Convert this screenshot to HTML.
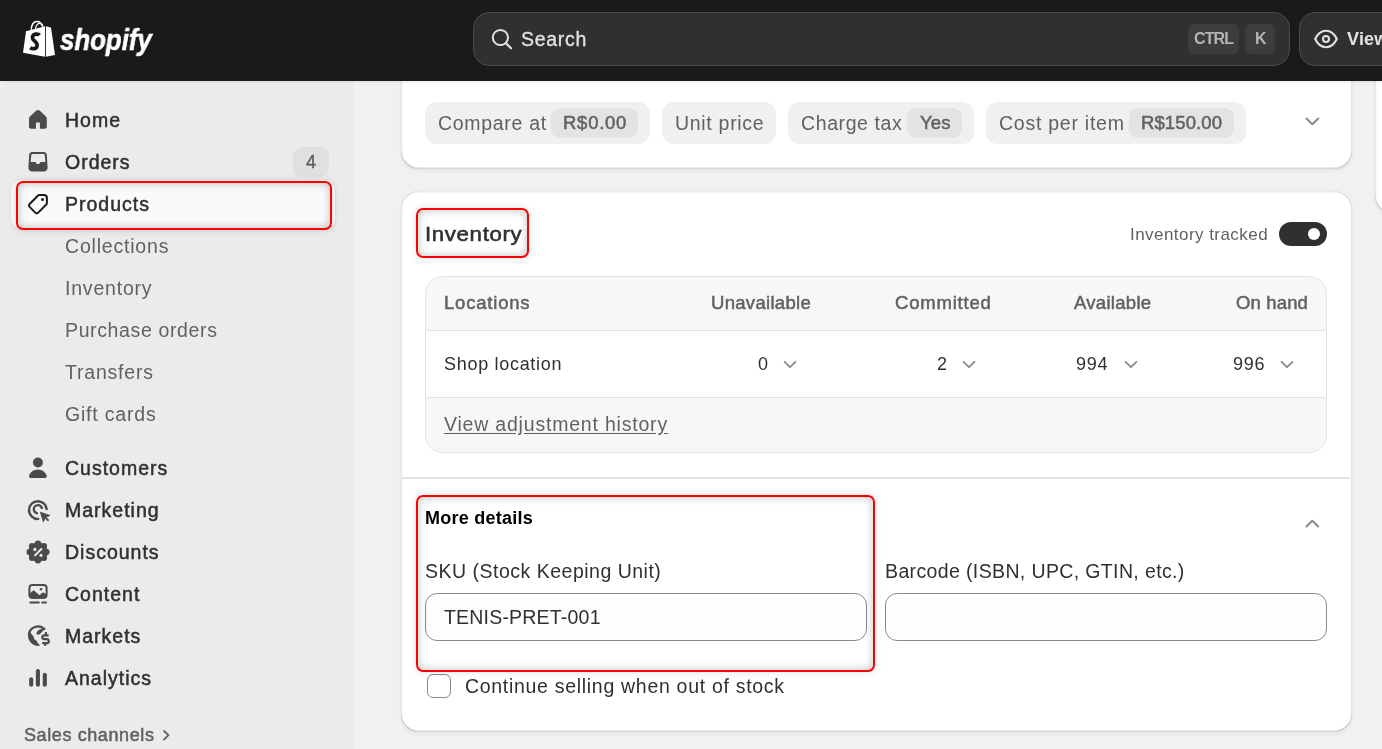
<!DOCTYPE html>
<html><head><meta charset="utf-8">
<style>
*{box-sizing:border-box;margin:0;padding:0}
html,body{width:1382px;height:749px;overflow:hidden;background:#f1f1f1;font-family:"Liberation Sans",sans-serif;}
.abs{position:absolute}
.t{position:absolute;white-space:nowrap;line-height:1;will-change:transform}
#top{position:absolute;left:0;top:0;width:1382px;height:81px;background:#1a1a1a;z-index:10;box-shadow:0 1.5px 3px rgba(0,0,0,.07)}
#side{position:absolute;left:0;top:81px;width:353px;height:668px;background:#ebebeb;border-top-left-radius:12px}
.nav{font-size:19.5px;color:#303030;-webkit-text-stroke:0.5px #303030;letter-spacing:1px}
.sub{font-size:19.5px;color:#616161;letter-spacing:0.8px}
.card{position:absolute;background:#fff;border-radius:18px;box-shadow:0 2px 4px rgba(26,26,26,.06),inset 0 1.5px 0 0 rgba(204,204,204,.4),inset 0 -1.5px 0 0 rgba(0,0,0,.16),inset -1.2px 0 0 0 rgba(0,0,0,.10),inset 1.2px 0 0 0 rgba(0,0,0,.10)}
.chip{position:absolute;top:102px;height:42px;background:#f0f0f0;border-radius:12px}
.ichip{position:absolute;top:6px;height:30px;background:#e3e3e3;border-radius:9px}
.ct{font-size:19.5px;color:#616161;letter-spacing:0.7px}
.cb{font-size:18.5px;color:#616161;-webkit-text-stroke:0.5px #616161}
.red{position:absolute;border:2px solid #ff0000;border-radius:7px;box-shadow:inset 0 0 8px rgba(0,0,0,.26),0 0 8px rgba(0,0,0,.12)}
.th{font-size:18.5px;color:#616161;-webkit-text-stroke:0.5px #616161;letter-spacing:0.8px}
.td{font-size:18px;color:#303030;letter-spacing:0.7px}
.body{font-size:19.5px;color:#303030}
.chev{position:absolute}
</style></head><body>
<div id="top">
  <svg class="abs" style="left:22px;top:20px" width="34" height="38" viewBox="0 0 34 38">
    <path d="M9.2 9.8 C9.6 4.2 12 1.4 15 1.4 C17.6 1.4 19.6 3.2 20.6 6.4" fill="none" stroke="#fff" stroke-width="1.5"/>
    <path d="M13.4 8.8 C14.2 5.2 15.8 3.3 17.8 3.3 C19.4 3.3 20.4 4.6 21.2 6.4" fill="none" stroke="#fff" stroke-width="1.2"/>
    <path d="M4 11.2 L23 6.2 L23 36.8 L1 32.8 Z" fill="#fff"/>
    <path d="M23.9 6.3 L29 7.4 L33 35 L23.9 36.8 Z" fill="#fff"/>
    <path d="M17.6 15.2 C16.4 13.7 10.9 13.3 10.4 17.3 C10 20.9 15.7 21.7 15.1 25.7 C14.6 29.1 10.6 29.4 8.1 27.7" fill="none" stroke="#1a1a1a" stroke-width="3.7"/>
  </svg>
  <div class="t" style="left:59.5px;top:25px;font-size:30px;font-weight:700;font-style:italic;color:#fff;-webkit-text-stroke:0.6px #fff;transform:scaleX(0.86);transform-origin:0 0">shopify</div>
  <div class="abs" style="left:473px;top:12px;width:817px;height:54px;background:#303030;border:1px solid #4a4a4a;border-radius:16px"></div>
  <svg class="abs" style="left:490px;top:27px" width="24" height="24" viewBox="0 0 24 24">
    <circle cx="10.4" cy="10.5" r="7.6" fill="none" stroke="#e3e3e3" stroke-width="2"/>
    <path d="M16 16.2 L21 21.2" stroke="#e3e3e3" stroke-width="2.2" stroke-linecap="round"/>
  </svg>
  <div class="t" style="left:521px;top:29.5px;font-size:19.5px;letter-spacing:0.7px;color:#e3e3e3;-webkit-text-stroke:0.3px #e3e3e3">Search</div>
  <div class="abs" style="left:1188px;top:24px;width:51px;height:30px;background:#3d3d3d;border-radius:6px"></div>
  <div class="t" style="left:1194px;top:30.7px;font-size:16px;font-weight:700;letter-spacing:-0.9px;color:#b5b5b5">CTRL</div>
  <div class="abs" style="left:1245px;top:24px;width:30px;height:30px;background:#3d3d3d;border-radius:6px"></div>
  <div class="t" style="left:1254.5px;top:30.7px;font-size:16px;font-weight:700;color:#b5b5b5">K</div>
  <div class="abs" style="left:1299px;top:12px;width:120px;height:54px;background:#303030;border:1px solid #4a4a4a;border-radius:16px"></div>
  <svg class="abs" style="left:1313px;top:27px" width="26" height="24" viewBox="0 0 26 24">
    <path d="M2.2 12 C5 6 9 3.8 13 3.8 C17 3.8 21 6 23.8 12 C21 18 17 20.2 13 20.2 C9 20.2 5 18 2.2 12 Z" fill="none" stroke="#e3e3e3" stroke-width="2.1"/>
    <circle cx="13" cy="12" r="3" fill="none" stroke="#e3e3e3" stroke-width="2.1"/>
  </svg>
  <div class="t" style="left:1347px;top:29.6px;font-size:18px;font-weight:700;letter-spacing:0.2px;color:#e3e3e3">View</div>
</div>

<div id="side"></div>

<!-- sidebar -->
<div class="abs" style="left:11px;top:180px;width:324px;height:49px;background:#fafafa;border-radius:10px;box-shadow:0 1px 3px rgba(0,0,0,.10)"></div>
<div class="t nav" style="left:65px;top:110.5px">Home</div>
<div class="t nav" style="left:65px;top:152.5px">Orders</div>
<div class="abs" style="left:293px;top:147px;width:36px;height:30px;background:#e0e0e0;border-radius:9px"></div>
<div class="t" style="left:305.5px;top:152.7px;font-size:18px;color:#616161;-webkit-text-stroke:0.5px #616161">4</div>
<div class="t nav" style="left:65px;top:194.5px">Products</div>
<div class="t sub" style="left:65px;top:236.5px">Collections</div>
<div class="t sub" style="left:65px;top:278.5px">Inventory</div>
<div class="t sub" style="left:65px;top:320.5px;letter-spacing:0.63px">Purchase orders</div>
<div class="t sub" style="left:65px;top:362.5px">Transfers</div>
<div class="t sub" style="left:65px;top:404.5px">Gift cards</div>
<div class="t nav" style="left:65px;top:458.5px">Customers</div>
<div class="t nav" style="left:65px;top:500.5px">Marketing</div>
<div class="t nav" style="left:65px;top:542.5px">Discounts</div>
<div class="t nav" style="left:65px;top:584.5px">Content</div>
<div class="t nav" style="left:65px;top:626.5px">Markets</div>
<div class="t nav" style="left:65px;top:668.5px">Analytics</div>
<div class="t" style="left:23.5px;top:725.5px;font-size:18px;color:#616161;-webkit-text-stroke:0.5px #616161;letter-spacing:0.6px">Sales channels</div>
<svg class="abs" style="left:158px;top:725px" width="20" height="20" viewBox="0 0 20 20"><path fill="none" stroke="#616161" stroke-width="1.8" stroke-linecap="round" stroke-linejoin="round" d="M6 6L10.5 10.2L6 14.5"/></svg>
<div class="red" style="left:15.5px;top:180.5px;width:316px;height:49px"></div>

<svg class="abs" style="left:22px;top:104px" width="32" height="32" viewBox="0 0 32 32"><path fill="#4a4a4a" d="M16 6c-.6 0-1.2.2-1.6.6L7.9 12.6C7.3 13.2 7 13.9 7 14.7V22.8c0 1.1.9 2 2 2H13.9V18.4H17.9V24.8H22.8c1.1 0 2-.9 2-2V14.7c0-.8-.3-1.5-.9-2.1L17.6 6.6C17.2 6.2 16.6 6 16 6Z"/></svg>
<svg class="abs" style="left:22px;top:146px" width="32" height="32" viewBox="0 0 32 32"><path fill="#4a4a4a" fill-rule="evenodd" d="M10.2 6H21.8c1.5 0 2.8 1.1 3 2.6L25.6 21.4c.2 2.2-1.5 4-3.7 4H10.1c-2.2 0-3.9-1.8-3.7-4L7.2 8.6C7.4 7.1 8.7 6 10.2 6ZM10.3 8.1c-.5 0-.9.4-1 .9L8.6 15.9H13.6c.3 1.3 1.2 2.1 2.4 2.1s2.1-.8 2.4-2.1H23.4L22.7 9c-.1-.5-.5-.9-1-.9Z"/></svg>
<svg class="abs" style="left:22px;top:188px" width="32" height="32" viewBox="0 0 32 32"><path fill="none" stroke="#1a1a1a" stroke-width="2" stroke-linejoin="round" d="M17 7H22c1.6 0 2.9 1.3 2.9 2.9V15c0 .6-.2 1.1-.6 1.5l-8.1 8.1c-.8.8-2.1.8-2.9 0L7.6 18.9c-.8-.8-.8-2.1 0-2.9l8-8C16 7.3 16.5 7 17 7Z"/><circle cx="20.5" cy="11.5" r="1.5" fill="#1a1a1a"/></svg>
<svg class="abs" style="left:22px;top:452px" width="32" height="32" viewBox="0 0 32 32"><circle cx="15.9" cy="10.5" r="5" fill="#4a4a4a"/><path fill="#4a4a4a" d="M15.9 17.5c-4.4 0-7.6 2.9-8.8 6.1-.3.9.3 2.3 1.3 2.3H23.4c1 0 1.6-1.4 1.3-2.3-1.2-3.2-4.4-6.1-8.8-6.1Z"/></svg>
<svg class="abs" style="left:22px;top:494px" width="32" height="32" viewBox="0 0 32 32"><path fill="none" stroke="#4a4a4a" stroke-width="2.4" stroke-linecap="round" d="M16.2 24.9C11.5 25.3 7 21.3 7 16c0-4.9 4-8.8 8.9-8.8 4.5 0 8.3 3.4 8.8 7.8"/><path fill="none" stroke="#4a4a4a" stroke-width="2.3" stroke-linecap="round" d="M15 19.3c-1.8-.5-3.2-2.1-3.2-4 0-2.3 1.9-4.1 4.2-4.1 1.8 0 3.3 1.2 3.9 2.8"/><path fill="#4a4a4a" d="M18.4 18.2L28 21.4L24 23.2L26.8 26L25.8 27L23 24.2L21.3 27.9Z" stroke="#4a4a4a" stroke-width=".8" stroke-linejoin="round"/></svg>
<svg class="abs" style="left:22px;top:536px" width="32" height="32" viewBox="0 0 32 32"><g fill="#4a4a4a"><circle cx="16" cy="16" r="9.6"/><circle cx="16.00" cy="7.70" r="3.2"/><circle cx="21.87" cy="10.13" r="3.2"/><circle cx="24.30" cy="16.00" r="3.2"/><circle cx="21.87" cy="21.87" r="3.2"/><circle cx="16.00" cy="24.30" r="3.2"/><circle cx="10.13" cy="21.87" r="3.2"/><circle cx="7.70" cy="16.00" r="3.2"/><circle cx="10.13" cy="10.13" r="3.2"/></g><path stroke="#ebebeb" stroke-width="2" stroke-linecap="round" d="M13 19.4L19.4 13"/><circle cx="12.9" cy="13.4" r="1.6" fill="#ebebeb"/><circle cx="19" cy="19.3" r="1.6" fill="#ebebeb"/></svg>
<svg class="abs" style="left:22px;top:578px" width="32" height="32" viewBox="0 0 32 32"><rect x="7.4" y="7" width="17.2" height="12.7" rx="3" fill="none" stroke="#4a4a4a" stroke-width="2"/><path fill="#4a4a4a" d="M7.4 15.5L11.8 12.2L17.5 17.3L21 14.3L24.6 16.5V17.7c0 1.6-1.3 3-3 3H10.4c-1.6 0-3-1.3-3-3Z"/><circle cx="19" cy="11.3" r="1.3" fill="#4a4a4a"/><path stroke="#4a4a4a" stroke-width="2" stroke-linecap="round" d="M8.3 24.6H16.9M20.2 24.6H24"/></svg>
<svg class="abs" style="left:22px;top:620px" width="32" height="32" viewBox="0 0 32 32"><path fill="none" stroke="#4a4a4a" stroke-width="2.2" d="M6.9 15.6A9.1 9.1 0 0 1 23 9.75"/><path fill="#4a4a4a" d="M8.2 12.2L11.7 16.8L12 19L14.6 20.7L15.9 23.2L17.8 24.9L17.6 25.8A10.2 10.2 0 0 1 6.4 12.8Z"/><path fill="#4a4a4a" d="M14.3 13.6C14.8 11.8 16 10.3 17.5 9.6L22.3 8.1C21.9 9.6 21 11 19.8 12.2L17.9 14C16.9 14.8 15 15 14.3 13.6Z"/><path fill="none" stroke="#4a4a4a" stroke-width="2.2" d="M26.6 15.3H22.4C21.1 15.3 20.3 16.1 20.3 17.2C20.3 18.4 21.1 19.1 22.4 19.1H24.6C25.9 19.1 26.8 20 26.8 21.2C26.8 22.4 25.9 23.2 24.6 23.2H20.2M23.9 12V15.3M23.2 23.2V25.8"/></svg>
<svg class="abs" style="left:22px;top:662px" width="32" height="32" viewBox="0 0 32 32"><path stroke="#4a4a4a" stroke-width="4.1" stroke-linecap="round" d="M9.2 17.2V22.7M15.9 9V22.7M22.8 12.9V22.7"/></svg>

<!-- card 1 -->
<div class="card" style="left:400.5px;top:30px;width:951px;height:138.5px"></div>
<div class="chip" style="left:425px;width:225px"><div class="t ct" style="left:12.5px;top:11.6px">Compare at</div><div class="ichip" style="left:126px;width:87px"><div class="t cb" style="left:12px;top:6.4px;letter-spacing:0.75px">R$0.00</div></div></div>
<div class="chip" style="left:662px;width:114px"><div class="t ct" style="left:12.5px;top:11.6px">Unit price</div></div>
<div class="chip" style="left:788px;width:186px"><div class="t ct" style="left:12.5px;top:11.6px;letter-spacing:0.6px">Charge tax</div><div class="ichip" style="left:119px;width:55px"><div class="t cb" style="left:13px;top:6.4px;letter-spacing:0.2px">Yes</div></div></div>
<div class="chip" style="left:986px;width:260px"><div class="t ct" style="left:12.5px;top:11.6px;letter-spacing:0.75px">Cost per item</div><div class="ichip" style="left:143px;width:105px"><div class="t cb" style="left:12px;top:6.4px;letter-spacing:0.1px">R$150.00</div></div></div>
<svg class="chev" style="left:1300px;top:110px" width="24" height="24" viewBox="0 0 24 24"><path fill="none" stroke="#8a8a8a" stroke-width="2" stroke-linecap="round" stroke-linejoin="round" d="M6.5 8.5L12.3 14.3L18.2 8.5"/></svg>

<!-- right partial card -->
<div class="card" style="left:1375px;top:30px;width:60px;height:184px"></div>

<!-- card 2 -->
<div class="card" style="left:400.5px;top:191px;width:951px;height:540.5px"></div>
<div class="t" style="left:424.5px;top:223.2px;font-size:21px;color:#303030;-webkit-text-stroke:0.6px #303030;letter-spacing:0.6px;transform:scaleX(1.06);transform-origin:0 0">Inventory</div>
<div class="t" style="left:1129.5px;top:225.8px;font-size:17px;color:#616161;letter-spacing:0.45px">Inventory tracked</div>
<div class="abs" style="left:1279px;top:222px;width:48px;height:24px;background:#303030;border-radius:12px"></div>
<div class="abs" style="left:1307.5px;top:227.5px;width:12.6px;height:12.6px;background:#fff;border-radius:50%"></div>
<div class="red" style="left:415.5px;top:208px;width:113.5px;height:49.5px"></div>

<div class="abs" style="left:425px;top:276px;width:902px;height:177px;border:1px solid #e3e3e3;border-radius:18px;background:#f7f7f7;overflow:hidden">
  <div class="abs" style="left:0;top:53px;width:900px;height:68px;background:#fff;border-top:1px solid #e3e3e3;border-bottom:1px solid #e3e3e3"></div>
</div>
<div class="t th" style="left:444px;top:293.9px">Locations</div>
<div class="t th" style="left:711px;top:293.9px;letter-spacing:0.3px">Unavailable</div>
<div class="t th" style="left:895px;top:293.9px">Committed</div>
<div class="t th" style="left:1074px;top:293.9px;letter-spacing:0.3px">Available</div>
<div class="t th" style="left:1235.5px;top:293.9px;letter-spacing:0.15px">On hand</div>
<div class="t td" style="left:444px;top:355.2px">Shop location</div>
<div class="t td" style="left:758px;top:355.2px">0</div>
<div class="t td" style="left:937px;top:355.2px">2</div>
<div class="t td" style="left:1076px;top:355.2px">994</div>
<div class="t td" style="left:1233px;top:355.2px">996</div>
<svg class="chev" style="left:780px;top:354px" width="20" height="20" viewBox="0 0 20 20"><path fill="none" stroke="#8a8a8a" stroke-width="1.8" stroke-linecap="round" stroke-linejoin="round" d="M4.6 7.8L10 13.2L15.4 7.8"/></svg>
<svg class="chev" style="left:959px;top:354px" width="20" height="20" viewBox="0 0 20 20"><path fill="none" stroke="#8a8a8a" stroke-width="1.8" stroke-linecap="round" stroke-linejoin="round" d="M4.6 7.8L10 13.2L15.4 7.8"/></svg>
<svg class="chev" style="left:1121px;top:354px" width="20" height="20" viewBox="0 0 20 20"><path fill="none" stroke="#8a8a8a" stroke-width="1.8" stroke-linecap="round" stroke-linejoin="round" d="M4.6 7.8L10 13.2L15.4 7.8"/></svg>
<svg class="chev" style="left:1277px;top:354px" width="20" height="20" viewBox="0 0 20 20"><path fill="none" stroke="#8a8a8a" stroke-width="1.8" stroke-linecap="round" stroke-linejoin="round" d="M4.6 7.8L10 13.2L15.4 7.8"/></svg>

<div class="t" style="left:444px;top:415.3px;font-size:19.5px;color:#616161;letter-spacing:0.8px;text-decoration:underline;text-underline-offset:2px">View adjustment history</div>

<div class="abs" style="left:402px;top:477px;width:948px;height:1.5px;background:#e3e3e3"></div>
<div class="t" style="left:425.5px;top:509.1px;font-size:18px;font-weight:700;color:#000;letter-spacing:0.25px;margin-left:-1px">More details</div>
<svg class="chev" style="left:1300px;top:512px" width="24" height="24" viewBox="0 0 24 24"><path fill="none" stroke="#8a8a8a" stroke-width="2" stroke-linecap="round" stroke-linejoin="round" d="M6.5 14.5L12.3 8.7L18.2 14.5"/></svg>
<div class="t body" style="left:425px;top:562.1px;letter-spacing:0.5px">SKU (Stock Keeping Unit)</div>
<div class="t body" style="left:884.5px;top:562.1px;letter-spacing:0.37px">Barcode (ISBN, UPC, GTIN, etc.)</div>
<div class="abs" style="left:425px;top:593px;width:442px;height:48px;background:#fdfdfd;border:1px solid #8a8a8a;border-radius:12px"></div>
<div class="t body" style="left:444px;top:607.8px;letter-spacing:0.2px">TENIS-PRET-001</div>
<div class="abs" style="left:885px;top:593px;width:442px;height:48px;background:#fdfdfd;border:1px solid #8a8a8a;border-radius:12px"></div>
<div class="abs" style="left:427px;top:674px;width:24px;height:24px;background:#fff;border:1.2px solid #8a8a8a;border-radius:6px"></div>
<div class="t body" style="left:464.5px;top:676.7px;letter-spacing:0.7px">Continue selling when out of stock</div>
<div class="red" style="left:415.5px;top:494.5px;width:459px;height:177px"></div>
</body></html>
